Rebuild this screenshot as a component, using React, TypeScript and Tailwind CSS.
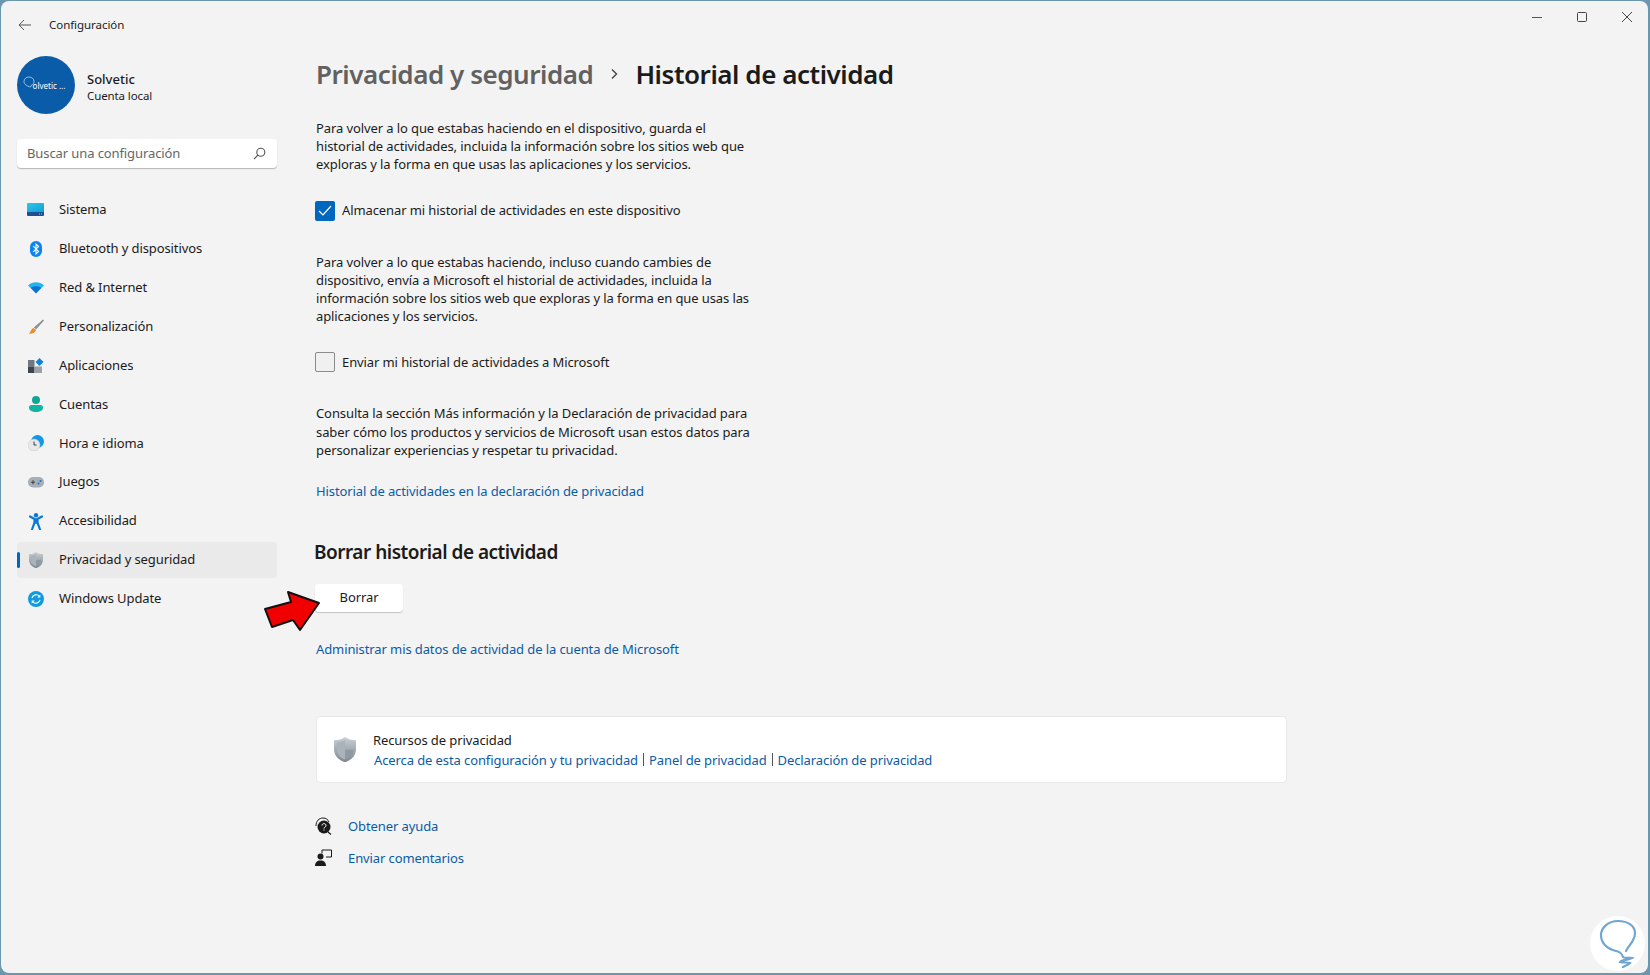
import React from 'react';

const font = { fontFamily: '"Noto Sans", "Open Sans", sans-serif' };

function SystemIcon() {
  return (
    <svg width="18" height="14" viewBox="0 0 18 14">
      <defs>
        <linearGradient id="sys" x1="0" y1="0" x2="1" y2="1">
          <stop offset="0" stopColor="#2fc6e8" />
          <stop offset="1" stopColor="#0f9fd8" />
        </linearGradient>
      </defs>
      <path d="M1 0h15a1 1 0 0 1 1 1v8H0V1a1 1 0 0 1 1-1z" fill="url(#sys)" />
      <path d="M0 9h17v3a1 1 0 0 1-1 1H1a1 1 0 0 1-1-1z" fill="#1d4f91" />
      <rect x="12" y="10.5" width="1" height="1" fill="#9cc3e6" />
      <rect x="14" y="10.5" width="1" height="1" fill="#9cc3e6" />
    </svg>
  );
}

function BluetoothIcon() {
  return (
    <svg width="12" height="16" viewBox="0 0 12 16">
      <rect width="12" height="16" rx="6" fill="#0a84f0" />
      <path d="M3.2 5.2 8.6 10.4 6 13V3l2.6 2.6-5.4 5.2" fill="none" stroke="#fff" strokeWidth="1.1" />
    </svg>
  );
}

function WifiIcon() {
  return (
    <svg width="16" height="12" viewBox="0 0 16 12">
      <path d="M0 3.5C4.5-.8 11.500-.8 16 3.500l-2.600 2.600H2.600z" fill="#22b4ee" />
      <path d="M2.600 6.100c3.200-2.500 7.600-2.500 10.800 0L8 11.500z" fill="#0a6fd6" />
    </svg>
  );
}

function BrushIcon() {
  return (
    <svg width="16" height="16" viewBox="0 0 16 16">
      <path d="M15 .5 16 1.500 8 10.500 5.800 8.500z" fill="#8a9099" />
      <path d="M5.300 9c-2 .5-2 3-4.300 5.800 3 .2 6-1 7-3.800z" fill="#f08a24" />
    </svg>
  );
}

function AppsIcon() {
  return (
    <svg width="16" height="15" viewBox="0 0 16 15">
      <rect x="0" y="2" width="6.500" height="6.500" fill="#6f7883" />
      <rect x="0" y="8.500" width="6.500" height="6.500" fill="#3f454c" />
      <rect x="7" y="8.500" width="7" height="6.500" fill="#9aa1a9" />
      <path d="M11.500 0 15.500 4 11.500 8 7.500 4z" fill="#0a84e0" />
    </svg>
  );
}

function PersonIcon() {
  return (
    <svg width="14" height="16" viewBox="0 0 14 16">
      <circle cx="7" cy="4" r="4" fill="#12a594" />
      <path d="M0 11.500c0-1.500 1-2.500 2.500-2.500h9c1.500 0 2.500 1 2.500 2.500 0 3-3 4.500-7 4.500s-7-1.500-7-4.500z" fill="#12b5a0" />
    </svg>
  );
}

function ClockIcon() {
  return (
    <svg width="16" height="16" viewBox="0 0 16 16">
      <circle cx="9.500" cy="6.500" r="6.500" fill="#1496e0" />
      <circle cx="6" cy="10" r="6" fill="#e6e8ea" stroke="#c4c8cc" strokeWidth="0.500" />
      <path d="M6 6.500V10h2.500" fill="none" stroke="#3a4048" strokeWidth="1" />
    </svg>
  );
}

function GamepadIcon() {
  return (
    <svg width="16" height="11" viewBox="0 0 16 11">
      <rect width="16" height="10.500" rx="5" fill="#a8aeb5" />
      <path d="M3 5.200h4M5 3.200v4" stroke="#3f454c" strokeWidth="1.100" />
      <circle cx="10.500" cy="6.500" r="1" fill="#0a78d6" />
      <circle cx="12.500" cy="4" r="1" fill="#0a78d6" />
    </svg>
  );
}

function AccessIcon() {
  return (
    <svg width="14" height="17" viewBox="0 0 14 17">
      <circle cx="7" cy="2.200" r="2.200" fill="#0a78d6" />
      <path d="M1 3.500 5.500 6v3.500L3 16.500M13 3.500 8.500 6v3.500l2.500 7M5.500 9.500h3" fill="none" stroke="#0a78d6" strokeWidth="2.200" strokeLinecap="round" />
      <rect x="5.200" y="5.500" width="3.600" height="5" fill="#0a78d6" />
    </svg>
  );
}

function ShieldIcon({ size = 14, id }: { size?: number; id: string }) {
  return (
    <svg width={size} height={size * 1.150} viewBox="0 0 20 23">
      <defs>
        <linearGradient id={id} x1="0" y1="0" x2="0" y2="1">
          <stop offset="0" stopColor="#c9d0d6" />
          <stop offset="1" stopColor="#7d868e" />
        </linearGradient>
      </defs>
      <path d="M10 0c3 2.200 6 3 10 3v8c0 6-4 10-10 12C4 21 0 17 0 11V3c4 0 7-.8 10-3z" fill={`url(#${id})`} />
      <path d="M10 2.500V20.500C5 19 2.500 15.500 2.500 11V5.200c3 0 5.500-1 7.500-2.700z" fill="#aab3ba" />
      <path d="M10 11.500H17.500C17 16 14.500 19 10 20.500z" fill="#8f99a1" />
    </svg>
  );
}

function UpdateIcon() {
  return (
    <svg width="16" height="16" viewBox="0 0 16 16">
      <circle cx="8" cy="8" r="8" fill="#0f9be0" />
      <path d="M4 7.200A4.200 4.200 0 0 1 11.500 5.500M12 8.800A4.200 4.200 0 0 1 4.500 10.500" fill="none" stroke="#fff" strokeWidth="1.200" />
      <path d="M12.300 3.500v3h-3zM3.700 12.500v-3h3z" fill="#fff" />
    </svg>
  );
}

const navItems = [
  { label: 'Sistema', icon: <SystemIcon /> },
  { label: 'Bluetooth y dispositivos', icon: <BluetoothIcon /> },
  { label: 'Red & Internet', icon: <WifiIcon /> },
  { label: 'Personalización', icon: <BrushIcon /> },
  { label: 'Aplicaciones', icon: <AppsIcon /> },
  { label: 'Cuentas', icon: <PersonIcon /> },
  { label: 'Hora e idioma', icon: <ClockIcon /> },
  { label: 'Juegos', icon: <GamepadIcon /> },
  { label: 'Accesibilidad', icon: <AccessIcon /> },
  { label: 'Privacidad y seguridad', icon: <ShieldIcon id="nav-shield" />, active: true },
  { label: 'Windows Update', icon: <UpdateIcon /> },
];

function Sidebar() {
  return (
    <aside className="w-[314px] shrink-0 pl-4 pr-[38px]">
      <div className="mt-2 flex h-[58px] items-center gap-3">
        <div className="relative flex h-[58px] w-[58px] shrink-0 items-center justify-center rounded-full bg-[#0b5ca8] text-white">
          <svg className="absolute left-[6px] top-[20px]" width="12" height="16" viewBox="0 0 12 16">
            <path d="M6 1c3 0 5 2 5 4.500 0 2-1 3-2.500 3.500l-1 2C4 10 1 8.500 1 5.500 1 3 3 1 6 1z" fill="none" stroke="#cfe2f3" strokeWidth="0.700" />
          </svg>
          <span className="ml-[6px] mt-[2px] text-[8px] leading-none">olvetic ...</span>
        </div>
        <div className="mt-[3px]">
          <div className="text-[13px] font-medium leading-[18px] text-[#1b1b1b]">Solvetic</div>
          <div className="text-[11.5px] leading-[16px] tracking-[-0.1px] text-[#1b1b1b]">Cuenta local</div>
        </div>
      </div>
      <div className="mt-[25px] flex h-[29px] items-center justify-between rounded bg-white pl-[10px] pr-[11px] shadow-[0_1px_1px_rgba(0,0,0,0.25)]">
        <span className="text-[13px] tracking-[-0.1px] text-[#666]">Buscar una configuración</span>
        <svg width="13" height="13" viewBox="0 0 13 13" fill="none" stroke="#555" strokeWidth="1.100">
          <circle cx="7.800" cy="5.200" r="4" />
          <path d="M5 8 1 12" />
        </svg>
      </div>
      <nav className="mt-[24px] flex flex-col gap-[2.9px]">
        {navItems.map((item) => (
          <div
            key={item.label}
            className={`relative flex h-9 items-center rounded ${item.active ? 'bg-[#eaeaea]' : ''}`}
          >
            {item.active && <span className="absolute left-0 top-[10px] h-4 w-[3px] rounded bg-[#0067c0]" />}
            <span className="flex w-[42px] shrink-0 justify-center pr-[4px]">{item.icon}</span>
            <span className="text-[13px] tracking-[-0.1px] text-[#1b1b1b]">{item.label}</span>
          </div>
        ))}
      </nav>
    </aside>
  );
}

function Checkbox({ checked }: { checked?: boolean }) {
  return checked ? (
    <span className="flex h-5 w-5 shrink-0 items-center justify-center rounded-[2px] bg-[#0067c0]">
      <svg width="14" height="11" viewBox="0 0 14 11" fill="none" stroke="#fff" strokeWidth="1.200">
        <path d="M1 6 5 10 13 1" />
      </svg>
    </span>
  ) : (
    <span className="h-5 w-5 shrink-0 rounded-[2px] border border-[#8a8a8a] bg-[#f0f0f0]" />
  );
}

function Link({ children, className = '' }: { children: React.ReactNode; className?: string }) {
  return <a className={`text-[13px] leading-5 tracking-[-0.1px] text-[#0a5ba6] ${className}`}>{children}</a>;
}

const para = 'ml-px w-[440px] whitespace-nowrap text-[13px] leading-[18.2px] tracking-[-0.1px] text-[#1b1b1b]';

function Main() {
  return (
    <main className="flex-1">
      <h1 className="ml-px mt-[6px] flex h-10 items-center text-[26px] font-semibold leading-10 tracking-[-0.45px]">
        <span className="text-[#616161]">Privacidad y seguridad</span>
        <svg className="ml-[17px] mr-[16px]" width="9" height="12" viewBox="0 0 9 12" fill="none" stroke="#444" strokeWidth="1.400">
          <path d="M2 1.500 6.500 6 2 10.500" />
        </svg>
        <span className="text-[#1b1b1b]">Historial de actividad</span>
      </h1>

      <p className={`mt-[25px] ${para}`}>
        Para volver a lo que estabas haciendo en el dispositivo, guarda el
        <br />
        historial de actividades, incluida la información sobre los sitios web que
        <br />
        exploras y la forma en que usas las aplicaciones y los servicios.
      </p>
      <label className="mt-[27px] flex h-5 items-center gap-[7px]">
        <Checkbox checked />
        <span className="text-[13px] tracking-[-0.1px] text-[#1b1b1b]">Almacenar mi historial de actividades en este dispositivo</span>
      </label>
      <p className={`mt-[32px] ${para}`}>
        Para volver a lo que estabas haciendo, incluso cuando cambies de
        <br />
        dispositivo, envía a Microsoft el historial de actividades, incluida la
        <br />
        información sobre los sitios web que exploras y la forma en que usas las
        <br />
        aplicaciones y los servicios.
      </p>
      <label className="mt-[27px] flex h-5 items-center gap-[7px]">
        <Checkbox />
        <span className="text-[13px] tracking-[-0.1px] text-[#1b1b1b]">Enviar mi historial de actividades a Microsoft</span>
      </label>
      <p className={`mt-[32px] ${para}`}>
        Consulta la sección Más información y la Declaración de privacidad para
        <br />
        saber cómo los productos y servicios de Microsoft usan estos datos para
        <br />
        personalizar experiencias y respetar tu privacidad.
      </p>
      <div className="ml-px mt-[19px] h-5">
        <Link>Historial de actividades en la declaración de privacidad</Link>
      </div>

      <h2 className="-ml-px mt-[40px] h-7 text-[19px] font-semibold leading-7 tracking-[-0.5px] text-[#1b1b1b]">
        Borrar historial de actividad
      </h2>
      <button className="mt-[18px] block h-7 w-[88px] rounded bg-white text-center text-[13px] tracking-[-0.1px] text-[#1b1b1b] shadow-[0_1px_1px_rgba(0,0,0,0.2)]">
        Borrar
      </button>
      <div className="ml-px mt-[24px] h-5">
        <Link>Administrar mis datos de actividad de la cuenta de Microsoft</Link>
      </div>

      <section className="ml-px mt-[60px] flex h-[67px] w-[971px] items-center rounded border border-[#e8e8e8] bg-white">
        <span className="ml-[17px] flex w-[22px] justify-center">
          <ShieldIcon size={22} id="card-shield" />
        </span>
        <div className="ml-[17px]">
          <div className="text-[13px] leading-5 tracking-[-0.1px] text-[#1b1b1b]">Recursos de privacidad</div>
          <div className="ml-px flex items-center text-[13px] leading-5">
            <Link>Acerca de esta configuración y tu privacidad</Link>
            <span className="mx-[5px] h-[13px] w-px bg-[#555]" />
            <Link>Panel de privacidad</Link>
            <span className="mx-[5px] h-[13px] w-px bg-[#555]" />
            <Link>Declaración de privacidad</Link>
          </div>
        </div>
      </section>

      <div className="mt-[33px] flex h-5 items-center">
        <svg className="w-[33px]" height="18" viewBox="0 0 33 18">
          <path d="M1 9C1 4 4 1 8 1c3 0 5 1.500 6 4" fill="none" stroke="#1b1b1b" strokeWidth="1" />
          <circle cx="9" cy="10" r="6.500" fill="#1b1b1b" />
          <path d="M7 8.500c0-2.500 4-2.500 4 0 0 1.500-2 1.500-2 3M9 12.500v1" fill="none" stroke="#fff" strokeWidth="1" />
          <path d="m13 15 3 2.500" stroke="#1b1b1b" strokeWidth="1.200" />
        </svg>
        <Link>Obtener ayuda</Link>
      </div>
      <div className="mt-3 flex h-5 items-center">
        <svg className="w-[33px]" height="18" viewBox="0 0 33 18">
          <circle cx="5.500" cy="7.500" r="3" fill="#1b1b1b" />
          <path d="M0 17c0-3.500 2-5.500 5.500-5.500S11 13.500 11 17z" fill="#1b1b1b" />
          <path d="M7 4.500V1h9.500v7H11" fill="none" stroke="#1b1b1b" strokeWidth="1" />
        </svg>
        <Link>Enviar comentarios</Link>
      </div>
    </main>
  );
}

export default function App() {
  return (
    <div className="relative h-[975px] w-[1650px] overflow-hidden bg-[#6a97ad] pb-[2px] pl-px pr-[2px] pt-px" style={font}>
      <div className="flex h-full flex-col rounded-lg bg-[#f3f3f3]">
        <header className="relative flex h-[47px] shrink-0 items-center">
          <svg className="ml-[17px]" width="14" height="12" viewBox="0 0 14 12" fill="none" stroke="#555" strokeWidth="1">
            <path d="M13 6H1M6 1 1 6l5 5" />
          </svg>
          <span className="ml-[17px] text-[11.5px] tracking-[-0.05px] text-[#1b1b1b]">Configuración</span>
          <div className="absolute right-[16px] top-[11px] flex items-center gap-[35px]">
            <svg width="10" height="10" viewBox="0 0 10 10" stroke="#555" strokeWidth="1">
              <path d="M0 5.500h10" />
            </svg>
            <svg width="10" height="10" viewBox="0 0 10 10" fill="none" stroke="#444" strokeWidth="1">
              <rect x="0.500" y="0.500" width="9" height="9" rx="1" />
            </svg>
            <svg width="10" height="10" viewBox="0 0 10 10" stroke="#444" strokeWidth="1">
              <path d="m0 0 10 10M10 0 0 10" />
            </svg>
          </div>
        </header>
        <div className="flex flex-1">
          <Sidebar />
          <Main />
        </div>
      </div>

      {/* flecha roja */}
      <svg className="absolute left-[262px] top-[588px]" width="60" height="46" viewBox="262 588 60 46">
        <path d="M319 603 288 592 291 602 265 609 272 627 293 620 300 630z" fill="#f00000" stroke="#111" strokeWidth="2" strokeLinejoin="round" />
      </svg>

      {/* marca de agua */}
      <div className="absolute left-[1590px] top-[916px] flex h-[55px] w-[55px] items-center justify-center rounded-full bg-white">
        <svg width="38" height="50" viewBox="0 0 38 50" fill="none" stroke="#6fa6d2" strokeWidth="2.200" strokeLinecap="round">
          <path d="M27 32c3-6 9-10 9-18C36 7 29 2 19 2 9 2 2 9 2 16c0 8 6 14 15 16 5 1 6 3 7 6 1 2 6 0 9 1-4 2-11 2-12 4 3 1 8 0 10 1-2 2-5 3-7 4" />
        </svg>
      </div>
    </div>
  );
}
